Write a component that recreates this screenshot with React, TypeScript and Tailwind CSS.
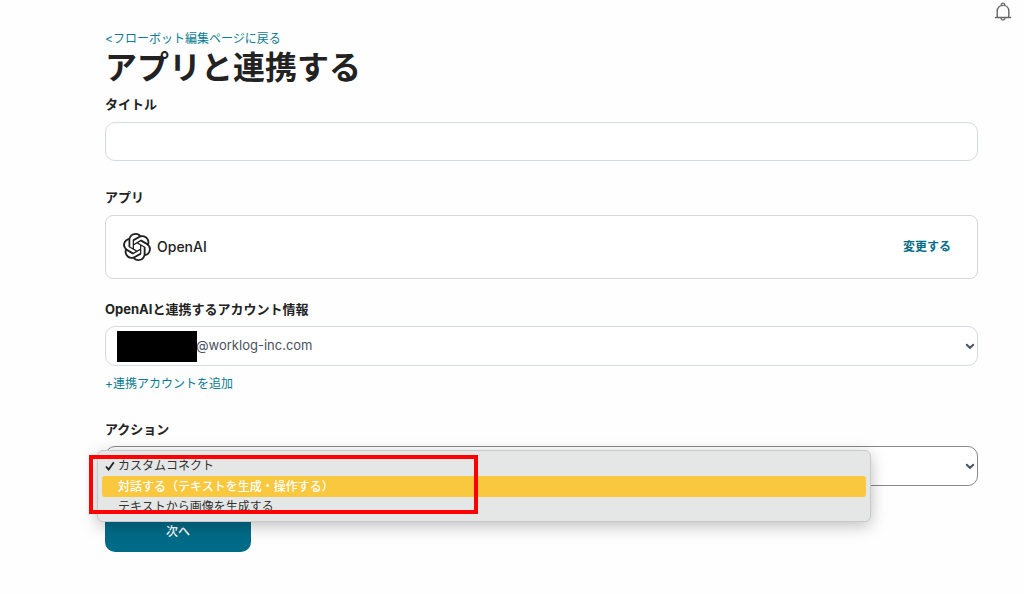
import { useState } from 'react';
import type { ReactNode } from 'react';
import { SiOpenai } from 'react-icons/si';

const actions = [
  'カスタムコネクト',
  '対話する（テキストを生成・操作する）',
  'テキストから画像を生成する',
];

const BellIcon = () => (
  <svg viewBox="0 0 18 20" className="w-[18px] h-5" fill="none" stroke="currentColor">
    <path
      d="M1.500 15.500h15M3.200 15.500V9C3.200 5.600 5.600 3.400 9 3.400s5.800 2.200 5.800 5.600v6.500"
      strokeWidth="1.400"
      strokeLinecap="round"
    />
    <path d="M7.300 3.500V2.300C7.300 1.600 8 1.200 9 1.200s1.700.4 1.700 1.100v1.200" strokeWidth="1.200" />
    <path d="M7 15.800c0 1.400.8 2.200 2 2.200s2-.8 2-2.200" strokeWidth="1.200" />
  </svg>
);

const Chevron = () => (
  <svg
    viewBox="0 0 10 8"
    className="absolute right-[3px] top-4 w-[10px] h-2 pointer-events-none"
    fill="none"
    stroke="#4a5160"
    strokeWidth="2"
  >
    <path d="M1.200 2.200L5 5.800l3.800-3.600" />
  </svg>
);

const Label = ({ htmlFor, children }: { htmlFor?: string; children: ReactNode }) => (
  <label htmlFor={htmlFor} className="block text-[13px] leading-4 font-bold text-[#222]">
    {children}
  </label>
);

const ActionMenu = ({ selected, onSelect }: { selected: string; onSelect: (v: string) => void }) => (
  <div
    role="listbox"
    aria-label="アクション"
    className="absolute z-10 top-1 -left-2 right-[107px] h-[72px] p-1 pt-[5px] rounded-md border border-[#c8caca] bg-[#e4e7e6] shadow-[0_4px_16px_rgba(0,0,0,0.25)]"
  >
    {actions.map((action, i) => (
      <button
        key={action}
        type="button"
        role="option"
        aria-selected={action === selected}
        onClick={() => onSelect(action)}
        className={
          i === 1
            ? 'flex items-center w-full h-[21px] rounded-[3px] bg-[#fac83f] text-white font-medium text-xs'
            : 'flex items-center w-full h-5 rounded-[3px] text-[#333] text-xs'
        }
      >
        <span className="w-4 flex justify-center">
          {action === selected && (
            <svg viewBox="0 0 10 10" className="w-[10px] h-[10px]" fill="none" stroke="#222" strokeWidth="1.800">
              <path d="M1 5.500L3.600 8.600L8.800 1.200" />
            </svg>
          )}
        </span>
        {action}
      </button>
    ))}
  </div>
);

export default function App() {
  const [title, setTitle] = useState('');
  const [action, setAction] = useState(actions[0]);

  return (
    <div className="min-h-screen bg-[#fefefe] font-['Inter','Noto_Sans_CJK_JP',sans-serif] text-[#222]">
      <header className="flex justify-end pt-[2px] pr-3">
        <button type="button" aria-label="お知らせ" className="text-[#666]">
          <BellIcon />
        </button>
      </header>

      <main className="pl-[105px] pr-[46px] pt-[9px]">
        <a href="#" className="block w-fit text-xs leading-4 text-[#0b7c93]">
          &lt;フローボット編集ページに戻る
        </a>
        <h1 className="text-[32px] leading-[42px] font-bold">アプリと連携する</h1>

        <form className="pt-[7px]">
          <Label htmlFor="title">タイトル</Label>
          <input
            id="title"
            value={title}
            onChange={e => setTitle(e.target.value)}
            className="mt-[10px] block w-full h-[39px] px-3 rounded-[10px] border border-[#d5d9e2] bg-white text-sm"
          />

          <div className="mt-7">
            <Label>アプリ</Label>
            <div className="mt-[10px] h-16 pl-[17px] pr-[26px] flex items-center justify-between rounded-lg border border-[#d6d6d6] bg-white">
              <span className="flex items-center gap-[6px] text-sm font-medium">
                <SiOpenai size={28} />
                OpenAI
              </span>
              <button type="button" className="text-xs font-bold text-[#036c86]">
                変更する
              </button>
            </div>
          </div>

          <div className="mt-[22px]">
            <Label htmlFor="account">OpenAIと連携するアカウント情報</Label>
            <div className="relative mt-[9px]">
              <select
                id="account"
                className="appearance-none block w-full h-10 pl-[90px] pr-8 rounded-[10px] border border-[#d5d9e2] bg-white text-[13px] text-[#4a5160]"
              >
                <option>@worklog-inc.com</option>
              </select>
              <span className="absolute left-3 top-[5px] w-20 h-[31px] bg-black pointer-events-none" />
              <Chevron />
            </div>
            <a href="#" className="mt-[10px] block w-fit text-xs leading-4 text-[#0b7c93]">
              +連携アカウントを追加
            </a>
          </div>

          <div className="mt-[29px]">
            <Label htmlFor="action">アクション</Label>
            <div className="relative mt-[9px]">
              <select
                id="action"
                value={action}
                onChange={e => setAction(e.target.value)}
                className="appearance-none block w-full h-10 pl-3 pr-8 rounded-[10px] border border-[#88898b] bg-white text-[13px] text-transparent"
              >
                {actions.map(a => (
                  <option key={a}>{a}</option>
                ))}
              </select>
              <Chevron />
              <ActionMenu selected={action} onSelect={setAction} />
              {/* highlight frame */}
              <div className="absolute z-20 top-[9px] -left-4 w-[389px] h-[59px] border-4 border-[#fe0000] pointer-events-none" />
            </div>
          </div>

          <button
            type="button"
            className="mt-[26px] block w-[146px] h-10 rounded-[10px] bg-[#006b87] text-white text-xs font-medium"
          >
            次へ
          </button>
        </form>
      </main>
    </div>
  );
}
